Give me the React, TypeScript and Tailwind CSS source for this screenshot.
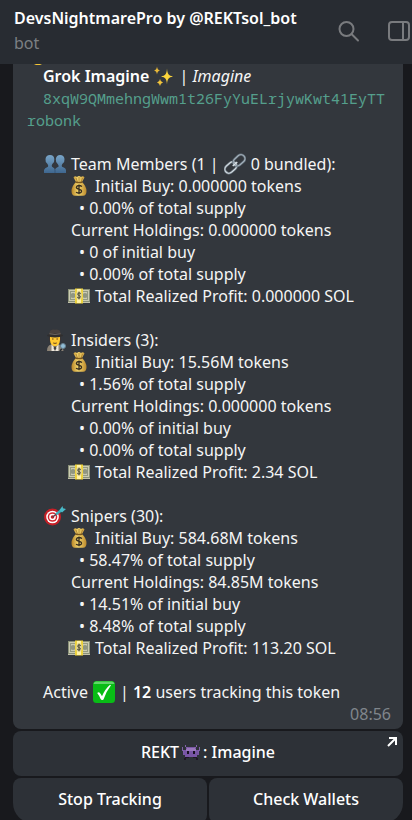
import type { ReactNode, SVGProps } from "react";

type Group = {
  icon: ReactNode;
  title: ReactNode;
  initialBuy: string;
  supplyBought: string;
  holdings: string;
  ofInitial: string;
  ofSupply: string;
  profit: string;
};

function Emoji({ children, ...props }: SVGProps<SVGSVGElement>) {
  return (
    <svg viewBox="0 0 22 22" width="22" height="22" className="shrink-0" aria-hidden {...props}>
      {children}
    </svg>
  );
}

function Sparkles() {
  return (
    <Emoji>
      <path d="M14 3.5C14.4 9 15.5 10.6 20 11.5C15.5 12.4 14.4 14 14 19.5C13.6 14 12.5 12.4 8 11.5C12.5 10.6 13.6 9 14 3.5Z" fill="#fcd53c" />
      <path d="M4 1.5Q4.3 5 7 5.5Q4.3 6 4 9.5Q3.7 6 1 5.5Q3.7 5 4 1.5Z" fill="#e8b93a" />
      <path d="M7 14Q7.4 17 10 17.5Q7.4 18 7 21Q6.6 18 4 17.5Q6.6 17 7 14Z" fill="#f3c53c" />
    </Emoji>
  );
}

function People() {
  return (
    <Emoji>
      <defs>
        <linearGradient id="people" x1="0" y1="0" x2="0" y2="1">
          <stop offset="0" stopColor="#79a5c8" />
          <stop offset="1" stopColor="#3f678f" />
        </linearGradient>
      </defs>
      <path d="M0 20V17Q.5 15 4 13.8Q4.6 12.5 3.5 11Q1 9 1.5 6Q2 2 6 2Q10 2 10.3 6Q10.8 9 8.3 11Q7.3 12.8 8 13.8Q11 15 11 17.5V20Z" fill="url(#people)" />
      <path d="M11 20V17.5Q11 15 14.5 13.8Q15 12.5 13.7 11Q11.5 9 11.8 6Q12.5 2 16 2Q20 2 20.5 6Q21 9 18.3 11Q17.3 12.5 18 13.8Q22 15 22 17.5V20Z" fill="url(#people)" />
      <path d="M11 17V20" stroke="#35577a" />
    </Emoji>
  );
}

function Link() {
  return (
    <Emoji>
      <g fill="none" transform="rotate(-42 11 11)">
        <rect x="-1" y="6.8" width="13" height="8" rx="4" stroke="#74808b" strokeWidth="2.4" />
        <rect x="-1" y="6.8" width="13" height="8" rx="4" stroke="#dce3e8" />
        <rect x="10" y="7" width="13" height="8" rx="4" stroke="#65717c" strokeWidth="2.4" />
        <rect x="10" y="7" width="13" height="8" rx="4" stroke="#a9b6c0" />
        <path d="M8 11H14" stroke="#d7dfe4" strokeWidth="1.5" />
      </g>
    </Emoji>
  );
}

function MoneyBag() {
  return (
    <Emoji width="16" height="22" viewBox="0 0 16 22">
      <defs>
        <linearGradient id="bag">
          <stop offset="0" stopColor="#b68428" />
          <stop offset=".45" stopColor="#f5d76d" />
          <stop offset="1" stopColor="#bb892d" />
        </linearGradient>
      </defs>
      <path d="M5 7L2.5 2.5Q4 .5 6 2Q8 .2 10 2Q12 .5 13.5 2.5L11 7Q15.3 11 15.5 16Q15.5 20.8 12 20.8H4Q.5 20.8 .5 16Q.7 11 5 7Z" fill="url(#bag)" />
      <path d="M5 3L6.5 7M8 2V7M11.5 3L10 7" stroke="#9c7028" strokeWidth=".7" />
      <path d="M4.6 7Q8 8.2 11.4 7" stroke="#77551e" strokeWidth="1.4" fill="none" />
      <path d="M11 11.5Q8 9.6 5.8 11.3Q4.3 13.2 8 14.3Q11.5 15.2 10.2 17.2Q8.3 19 5 17.2M8 9.5V19.2" fill="none" stroke="#362d20" strokeWidth="1.3" />
    </Emoji>
  );
}

function Banknote() {
  return (
    <Emoji>
      <rect y="4" width="22" height="14" fill="#899078" />
      <rect x="1" y="5" width="20" height="11" fill="#cbcbb2" />
      <rect x="2.5" y="6.5" width="17" height="8" fill="none" stroke="#939981" />
      <circle cx="5" cy="10.5" r="2.5" fill="#909681" />
      <circle cx="17" cy="10.5" r="2.5" fill="#909681" />
      <path d="M0 17.5H22" stroke="#c2c1aa" />
      <rect x="7" y="3.5" width="8" height="15" fill="#edd33f" />
      <rect x="9" y="4" width="4" height="14" fill="#fff2a8" />
      <ellipse cx="11" cy="10.5" rx="3" ry="4.3" fill="#ddd195" />
      <path d="M12.8 8.6Q11 7.2 9.8 8.6Q9.2 9.8 11 10.5Q13.2 11.3 12 12.6Q11 13.5 9.2 12.3M11 6.8V14.2" fill="none" stroke="#4c4d3a" />
    </Emoji>
  );
}

function Detective() {
  return (
    <Emoji>
      <path d="M3 22Q3 16.5 7 15.5H15Q19 16.5 19.5 22Z" fill="#8c8376" />
      <path d="M7.5 15L11 20L14.5 15V22H7.5Z" fill="#eee8dc" />
      <path d="M11 17L12.5 19L11 22L9.5 19Z" fill="#403f40" />
      <path d="M6 7Q4.8 10 6 13H16Q17.2 10 16 7Z" fill="#4c3426" />
      <path d="M6 6.5H16V11Q15.5 16.8 11 17.3Q6.5 16.8 6 11Z" fill="#ffc832" />
      <path d="M8 10H9.6M12.4 10H14M9.2 14Q11 14.8 12.8 14" fill="none" stroke="#6d451b" />
      <path d="M5 6L6 2Q8 -.3 11 .8Q14 -.3 16 2L17 6Z" fill="#48413e" />
      <ellipse cx="11" cy="6.5" rx="8" ry="1.9" fill="#302e2e" />
      <path d="M5.5 4.8Q11 6.2 16.5 4.8" fill="none" stroke="#6d6660" />
      <path d="M18 19.5L16 22" stroke="#252a30" strokeWidth="1.5" />
      <circle cx="19" cy="17" r="2.5" fill="#91bed7" stroke="#67808f" />
    </Emoji>
  );
}

function Target() {
  return (
    <Emoji>
      <circle cx="8.5" cy="12" r="8.5" fill="#c51f26" />
      <circle cx="8.5" cy="12" r="6.3" fill="#fff" />
      <circle cx="8.5" cy="12" r="4.8" fill="#d42730" />
      <circle cx="8.5" cy="12" r="3.3" fill="#fff" />
      <circle cx="8.5" cy="12" r="1.8" fill="#c51f26" />
      <path d="M8.5 12L17 6" stroke="#5b3f48" strokeWidth="1.5" />
      <path d="M12 9.3L17 5.5" stroke="#3eacba" strokeWidth="2.5" />
      <path d="M15.5 5L18.5 1L19 3.3L22 4L18 7.5Z" fill="#49bac9" />
    </Emoji>
  );
}

function Check() {
  return (
    <Emoji>
      <rect width="22" height="22" rx="3.5" fill="#09bc16" />
      <path d="M3 .5H19Q21 .5 21.5 3H.5Q1 .5 3 .5Z" fill="#61d669" />
      <path d="M4.2 12Q6.2 10 7.7 13L9 15.3Q12 8 17 3.7L18 4.3Q13.5 10 10.5 18.5Q8.5 20 7.5 17.8Q6.5 15 4.2 12Z" fill="#fff" />
    </Emoji>
  );
}

function Alien() {
  return (
    <Emoji width="20" height="20" viewBox="0 0 20 20" shapeRendering="crispEdges">
      <path d="M5 6H7V5H13V6H15V8H17V10H18V13H16V15H4V13H2V10H3V8H5Z" fill="#7955a5" />
      <path d="M6 6H14V7H15V9H5V7H6Z" fill="#9a78bd" />
      <path d="M4 3H5V5H7V6H5V5H4ZM15 3H16V5H15V6H13V5H15ZM1 5H2V8H3V11H2V9H1ZM18 5H19V9H18V11H17V8H18Z" fill="#8060a8" />
      <path d="M6 9H8V12H6ZM12 9H14V12H12Z" fill="#181020" />
      <path d="M4 15H8V16H5V18H3V16H4ZM12 15H16V16H17V18H15V16H12Z" fill="#211626" />
    </Emoji>
  );
}

const groups: Group[] = [
  {
    icon: <People />,
    title: (
      <>
        Team Members (1 |<span className="mx-[5px]"><Link /></span>0 bundled):
      </>
    ),
    initialBuy: "0.000000",
    supplyBought: "0.00%",
    holdings: "0.000000",
    ofInitial: "0",
    ofSupply: "0.00%",
    profit: "0.000000",
  },
  {
    icon: <Detective />,
    title: "Insiders (3):",
    initialBuy: "15.56M",
    supplyBought: "1.56%",
    holdings: "0.000000",
    ofInitial: "0.00%",
    ofSupply: "0.00%",
    profit: "2.34",
  },
  {
    icon: <Target />,
    title: "Snipers (30):",
    initialBuy: "584.68M",
    supplyBought: "58.47%",
    holdings: "84.85M",
    ofInitial: "14.51%",
    ofSupply: "8.48%",
    profit: "113.20",
  },
];

function GroupStats({ group }: { group: Group }) {
  return (
    <section className="mb-[22px] pl-4">
      <h2 className="flex h-[22px] items-center whitespace-nowrap">
        <span className="w-7 shrink-0 pl-px">{group.icon}</span>
        {group.title}
      </h2>
      <div className="pl-7">
        <p className="flex items-center gap-2">
          <MoneyBag />
          Initial Buy: {group.initialBuy} tokens
        </p>
        <p className="pl-2">• {group.supplyBought} of total supply</p>
        <p>Current Holdings: {group.holdings} tokens</p>
        <p className="pl-2">• {group.ofInitial} of initial buy</p>
        <p className="pl-2">• {group.ofSupply} of total supply</p>
      </div>
      <p className="flex items-center gap-[5px] pl-[25px]">
        <Banknote />
        Total Realized Profit: {group.profit} SOL
      </p>
    </section>
  );
}

export default function App() {
  return (
    <div className="flex h-screen flex-col overflow-hidden bg-[#18191d] font-['Noto_Sans',sans-serif] text-base leading-[22px] text-[#f5f5f5]">
      <header className="flex h-16 shrink-0 items-center justify-between bg-[#282c32] pl-3.5">
        <div className="pb-[3px] whitespace-nowrap">
          <h1 className="mb-[3px] font-semibold text-white">DevsNightmarePro by @REKTsol_bot</h1>
          <p className="text-[#7c8084]">bot</p>
        </div>
        <div className="flex shrink-0 items-center gap-7 text-[#797b7e]">
          <button aria-label="Search">
            <svg width="24" height="24" viewBox="0 0 24 24" fill="none" stroke="currentColor" strokeWidth="2" strokeLinecap="round">
              <circle cx="10.5" cy="9" r="7" />
              <path d="M15.5 14L22 20.5" />
            </svg>
          </button>
          <button aria-label="Toggle side panel">
            <svg width="24" height="24" viewBox="0 0 24 24" fill="none" stroke="currentColor" strokeWidth="2">
              <rect x="1" y="2" width="20" height="18" rx="3" />
              <path d="M15 2V20" />
            </svg>
          </button>
        </div>
      </header>

      <main className="flex flex-col gap-0.5 pr-[9px] pl-[13px]">
        <article className="rounded-b-lg bg-[#33373d] pr-3 pb-1 pl-3.5">
          <svg width="10" height="1" className="ml-1.5" aria-hidden>
            <path d="M1 0H9L7 1H3Z" fill="#f4c536" />
          </svg>
          <p className="flex items-center gap-1 pl-4">
            <strong className="font-semibold text-white">Grok Imagine</strong>
            <Sparkles />
            <span>
              | <em>Imagine</em>
            </span>
          </p>
          <p className="mb-[22px] indent-4 font-['Noto_Sans_Mono','Liberation_Mono',monospace] text-[15px] break-all text-[#559f8c]">
            8xqW9QMmehngWwm1t26FyYuELrjywKwt41EyTTrobonk
          </p>
          {groups.map((group) => (
            <GroupStats key={group.profit} group={group} />
          ))}
          <p className="flex items-center pl-4">
            Active
            <span className="mx-[5px]"><Check /></span>
            <span>
              | <strong className="font-semibold text-white">12</strong> users tracking this token
            </span>
          </p>
          <time className="block text-right text-[#80868c]">08:56</time>
        </article>

        <button className="relative flex h-[45px] items-center justify-center rounded-lg bg-[#2d3137] pb-[3px] font-medium text-white">
          REKT
          <span className="mx-0.5"><Alien /></span>
          : Imagine
          <svg className="absolute top-1.5 right-1.5" width="10" height="10" viewBox="0 0 10 10" fill="none" stroke="#fff" strokeWidth="2" aria-hidden>
            <path d="M2 1H9V8M9 1L1 9" />
          </svg>
        </button>
        <div className="grid grid-cols-2 gap-0.5 font-medium text-white">
          <button className="h-[45px] rounded-lg rounded-bl-[20px] bg-[#2d3137] pb-[3px]">Stop Tracking</button>
          <button className="h-[45px] rounded-lg rounded-br-[20px] bg-[#2d3137] pb-[3px]">Check Wallets</button>
        </div>
      </main>
    </div>
  );
}
